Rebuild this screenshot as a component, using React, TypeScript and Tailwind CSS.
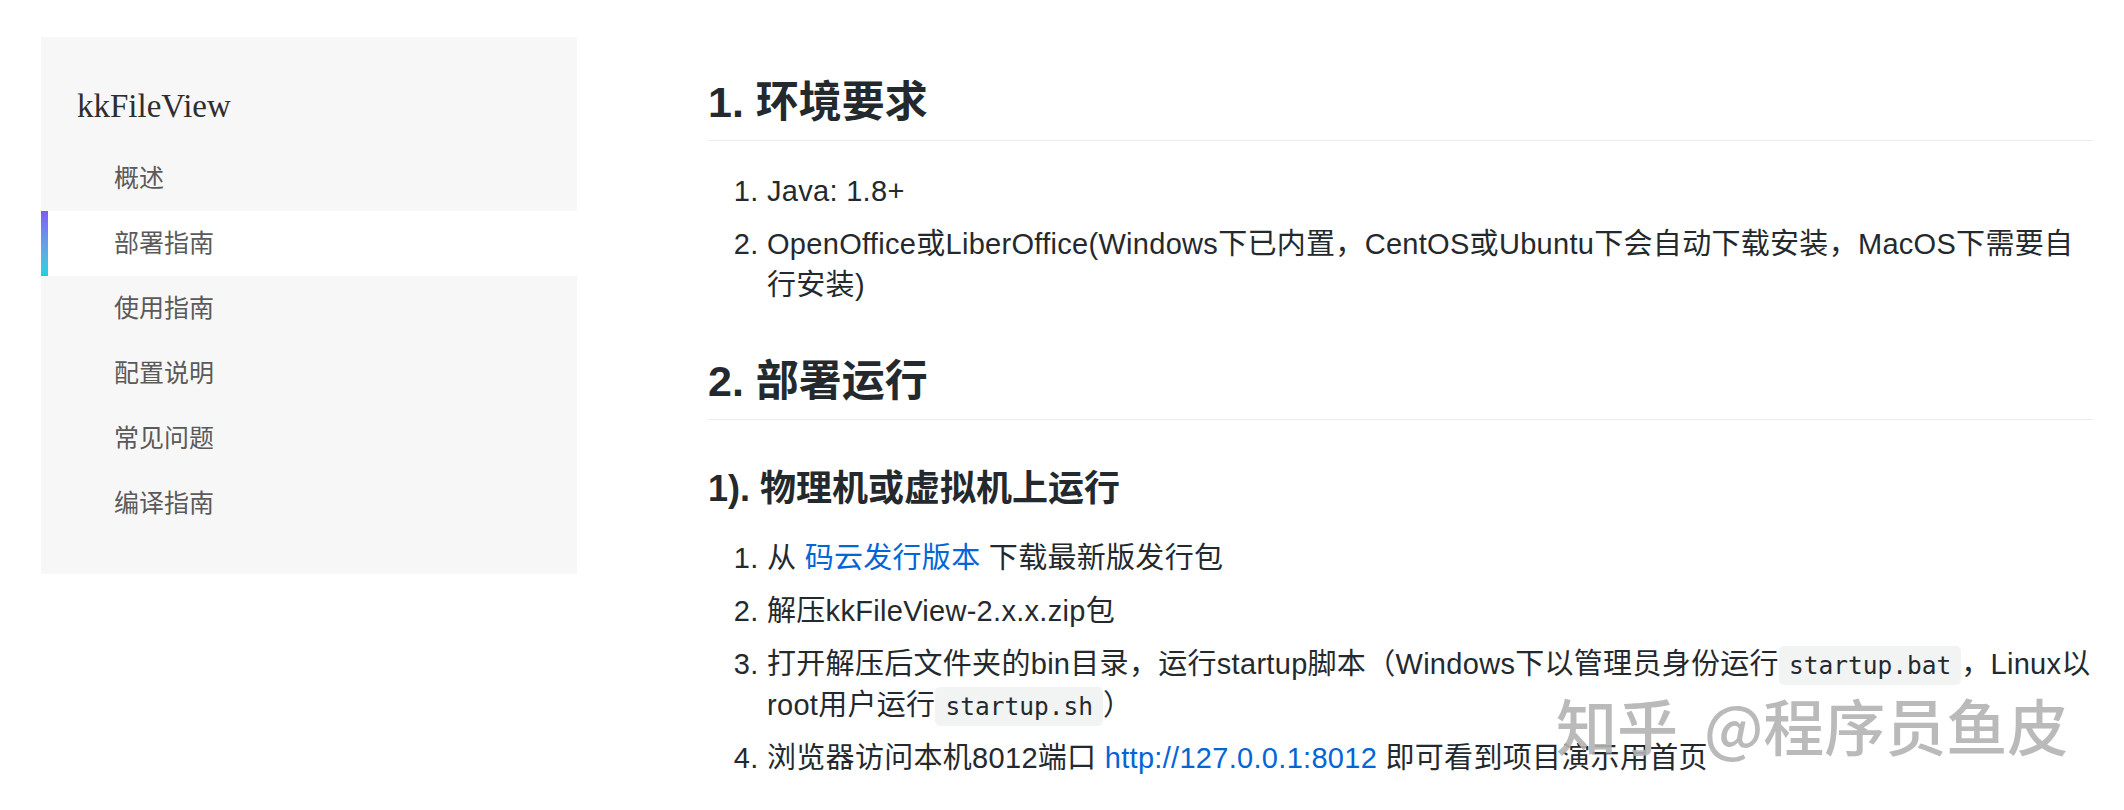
const NAV = ["概述", "部署指南", "使用指南", "配置说明", "常见问题", "编译指南"];

function Sidebar() {
  return (
    <aside className="ml-[41px] mt-[37px] w-[536px] shrink-0 self-start bg-[#f7f7f7] pt-[49px] pb-[38px]">
      <div className="pl-[36px] mb-[20px] text-[33px] leading-[40px] text-[#2e2e2e] font-['Liberation_Serif',serif]">
        kkFileView
      </div>
      <nav>
        {NAV.map((item, i) => (
          <div
            key={item}
            className={
              i === 1
                ? "relative h-[65px] flex items-center pl-[73px] bg-white text-[25px] text-[#5a5a5a]"
                : "relative h-[65px] flex items-center pl-[73px] text-[25px] text-[#5a5a5a]"
            }
          >
            {i === 1 && (
              <span className="absolute left-0 top-0 h-full w-[7px] bg-gradient-to-b from-[#7c5cf6] to-[#12d4dc]" />
            )}
            {item}
          </div>
        ))}
      </nav>
    </aside>
  );
}

function Code({ children }: { children: string }) {
  return (
    <code className="rounded-[5px] bg-[#f2f3f3] px-[10px] py-[5px] text-[24.5px] leading-none tracking-normal font-['DejaVu_Sans_Mono',monospace]">
      {children}
    </code>
  );
}

function Link({ children }: { children: string }) {
  return <a className="text-[#0366d6]">{children}</a>;
}

export default function App() {
  return (
    <div className="relative flex w-[2124px] h-[810px] overflow-hidden bg-white text-[#24292e] font-['Liberation_Sans','Noto_Sans_CJK_SC',sans-serif]">
      <Sidebar />

      <main className="ml-[131px] w-[1385px] pt-[75px]">
        <h2 className="border-b border-[#eaecef] pb-[11px] text-[43px] leading-[54px] font-bold">
          1. 环境要求
        </h2>
        <ol className="mt-[30px] list-decimal pl-[59px] text-[29px] leading-[41px] tracking-[0.3px]">
          <li>Java: 1.8+</li>
          <li className="mt-[12px]">
            <span className="whitespace-nowrap">
              OpenOffice或LiberOffice(Windows下已内置，CentOS或Ubuntu下会自动下载安装，MacOS下需要自
            </span>
            <br />
            行安装)
          </li>
        </ol>

        <h2 className="mt-[48px] border-b border-[#eaecef] pb-[11px] text-[43px] leading-[54px] font-bold">
          2. 部署运行
        </h2>

        <h3 className="mt-[46px] text-[36px] leading-[45px] font-bold">1). 物理机或虚拟机上运行</h3>
        <ol className="mt-[27px] list-decimal pl-[59px] text-[29px] leading-[41px] tracking-[0.3px]">
          <li>
            从 <Link>码云发行版本</Link> 下载最新版发行包
          </li>
          <li className="mt-[12px]">解压kkFileView-2.x.x.zip包</li>
          <li className="mt-[12px]">
            <span className="whitespace-nowrap">
              打开解压后文件夹的bin目录，运行startup脚本（Windows下以管理员身份运行<Code>startup.bat</Code>，Linux以
            </span>
            <br />
            root用户运行<Code>startup.sh</Code>）
          </li>
          <li className="mt-[12px]">
            浏览器访问本机8012端口 <Link>http://127.0.0.1:8012</Link> 即可看到项目演示用首页
          </li>
        </ol>
      </main>

      <div className="absolute left-[1556px] top-[694px] text-[61px] leading-none font-medium text-[#b3b3b3]/90 font-['Noto_Sans_CJK_SC',sans-serif] whitespace-nowrap">
        知乎<span className="ml-[26px]">@程序员鱼皮</span>
      </div>
    </div>
  );
}
